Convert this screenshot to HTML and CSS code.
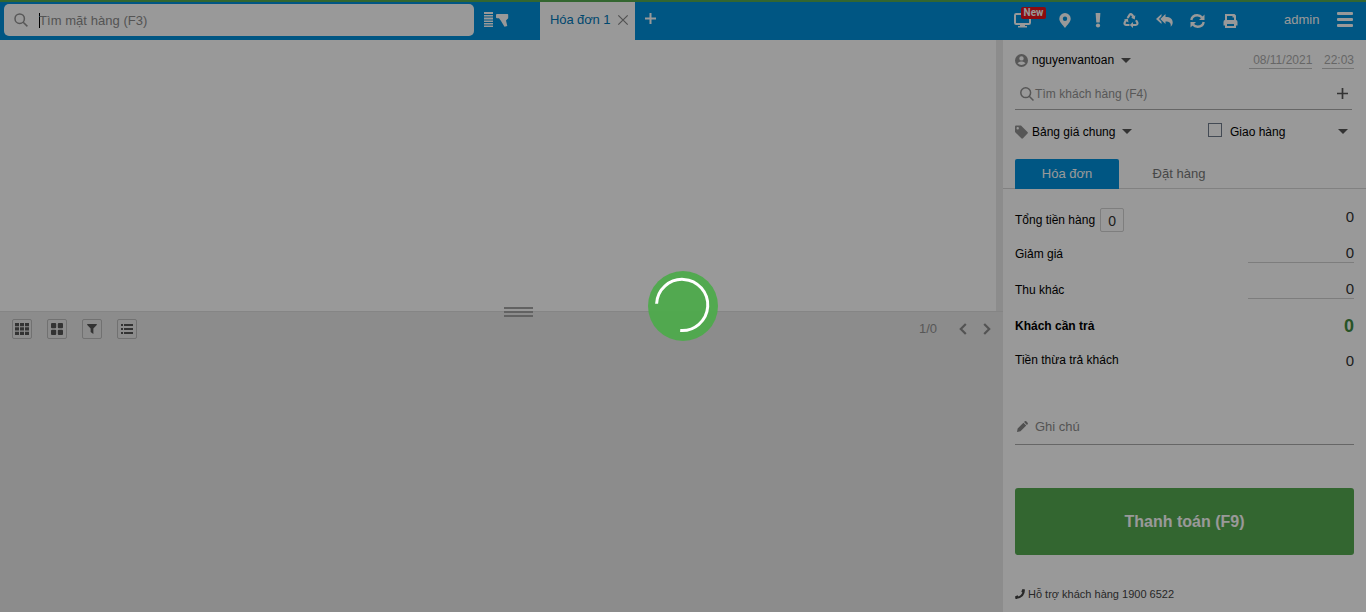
FILE: index.html
```html
<!DOCTYPE html>
<html lang="vi">
<head>
<meta charset="utf-8">
<title>Bán hàng</title>
<link rel="stylesheet" href="styles.css">
</head>
<body>
<div class="app">
  <header class="topbar">
    <div class="search">
      <svg class="search-icon" width="14" height="14" viewBox="0 0 14 14"><circle cx="5.7" cy="5.7" r="4.7"/><path d="M9.2 9.2l4.2 4.2"/></svg>
      <span class="caret"></span><span class="search-text">Tìm mặt hàng (F3)</span>
    </div>
    <svg class="scan-icon" width="25" height="16" viewBox="0 0 25 16"><path d="M0 0h9v2H0zM0 3h9v1.500H0zM0 5.500h9v2H0zM0 8.500h9V10H0zM0 11h9v1.500H0zM0 13.500h9V15H0zM12 3q0-1 1-1h10.500q.7 0 .7.800v3.400L22 8.500l1.300 5.500-2.800.8-3.800-6.300L15 6.200h-2q-1 0-1-1z"/></svg>
    <div class="tab"><span class="tab-text">Hóa đơn 1</span><svg width="10" height="10" viewBox="0 0 10 10"><path d="M.3.3l9.400 9.400M9.700.3L.3 9.700"/></svg></div>
    <svg class="add-tab" width="11" height="11" viewBox="0 0 11 11"><path d="M5.500 0v11M0 5.500h11"/></svg>
    <nav class="tools">
      <span class="tool monitor"><svg width="17" height="15" viewBox="0 0 17 15"><path class="line" d="M8.500 1H2.200Q1 1 1 2.200v7.600Q1 11 2.200 11h12.600q1.200 0 1.200-1.200V6"/><path d="M6 11h5v2h2v1.500H4V13h2z"/></svg><b class="badge">New</b></span>
      <svg class="tool pin" width="12" height="15" viewBox="0 0 12 15"><path fill-rule="evenodd" d="M6 0a5.700 5.700 0 0 1 5.700 5.700C11.700 9 8.500 11.500 6 15 3.500 11.500.3 9 .3 5.700A5.700 5.700 0 0 1 6 0zm0 3.600a2.200 2.200 0 1 0 0 4.400 2.200 2.200 0 0 0 0-4.400z"/></svg>
      <svg class="tool bang" width="6" height="15" viewBox="0 0 6 15"><path d="M.6 0h4.800L4.700 9.400H1.300z"/><circle cx="3" cy="12.500" r="2.100"/></svg>
      <svg class="tool recycle" width="16" height="15" viewBox="0 0 16 15"><path class="arc" d="M4.600 5l2-3.200q1.100-1.300 2.400 0L10.600 4M13 7.200l1.300 2.200q.7 2.400-1.700 2.600H9.500M6.500 12H3.200Q.7 11.500 1.800 9.300L3.200 7"/><path d="M12.300 2.200l-.5 4.200-3.700-1.600zM10 9v6l-3.200-3zM.8 6.800l4-1.300.7 4z"/></svg>
      <svg class="tool reply" width="17" height="13" viewBox="0 0 17 13"><path d="M5.500 0v2.300L3 5l2.500 2.700V10L0 5zM9.500 0v3c5 0 7.200 2 7.200 5.500 0 1.800-.7 3-2 4.300.5-3.800-1-5.300-5.200-5.300V10L4.300 5z"/></svg>
      <svg class="tool refresh" width="15" height="14" viewBox="0 0 15 14"><path class="turn" d="M1.300 6Q2.200 1.300 7.300 1.300q2.900 0 4.800 2.200M13.700 8q-.9 4.700-6 4.700-2.900 0-4.800-2.200"/><path d="M14.500.5V6H9zM.5 13.500V8H6z"/></svg>
      <svg class="tool print" width="15" height="14" viewBox="0 0 15 14"><path fill-rule="evenodd" d="M2 0h9.500L13 1.500V6q1.500.2 1.500 2v3.500H13V14H2v-2.500H.5V8q0-1.800 1.500-2zM4 2v4h7V3.500H9.500V2zM4 10v2h7v-2z"/></svg>
    </nav>
    <span class="user">admin</span>
    <span class="menu"><i></i><i></i><i></i></span>
  </header>
  <div class="body">
    <main class="left">
      <section class="cart"></section>
      <section class="products">
        <div class="grip"><i></i><i></i><i></i></div>
        <div class="views">
          <span class="view"><svg width="14" height="12" viewBox="0 0 14 12"><path d="M0 0h4v3.300H0zM5 0h4v3.300H5zM10 0h4v3.300h-4zM0 4.300h4v3.300H0zM5 4.300h4v3.300H5zM10 4.300h4v3.300h-4zM0 8.700h4V12H0zM5 8.700h4V12H5zM10 8.700h4V12h-4z"/></svg></span>
          <span class="view"><svg width="12" height="12" viewBox="0 0 12 12"><rect width="5.200" height="5.200" rx="1"/><rect x="6.800" width="5.200" height="5.200" rx="1"/><rect y="6.800" width="5.200" height="5.200" rx="1"/><rect x="6.800" y="6.800" width="5.200" height="5.200" rx="1"/></svg></span>
          <span class="view"><svg width="10" height="10" viewBox="0 0 11 11"><path d="M.5 0h10q.7.500.2 1L7 5v6L4 8.700V5L.3 1Q-.2.500.5 0z"/></svg></span>
          <span class="view"><svg width="12" height="10" viewBox="0 0 12 10"><path d="M0 0h2v2H0zM3 0h9v2H3zM0 4h2v2H0zM3 4h9v2H3zM0 8h2v2H0zM3 8h9v2H3z"/></svg></span>
        </div>
        <div class="pager"><span>1/0</span><svg width="8" height="12" viewBox="0 0 8 12"><path d="M6.800 1L1.800 6l5 5"/></svg><svg width="8" height="12" viewBox="0 0 8 12"><path d="M1.200 1l5 5-5 5"/></svg></div>
      </section>
    </main>
    <aside class="panel">
      <div class="row seller">
        <svg class="soft" width="13" height="13" viewBox="0 0 13 13"><path fill-rule="evenodd" d="M6.500 0a6.500 6.500 0 1 1 0 13 6.500 6.500 0 0 1 0-13zm0 2.200a2.200 2.200 0 1 0 0 4.400 2.200 2.200 0 0 0 0-4.400zM2.500 9.200q4 3.500 8 0Q8.500 7 6.500 7.500 4.500 7 2.500 9.200z"/></svg>
        <span class="name">nguyenvantoan</span><i class="arrow"></i>
        <span class="date">08/11/2021</span><span class="time">22:03</span>
      </div>
      <div class="row customer">
        <svg class="search-icon" width="14" height="14" viewBox="0 0 14 14"><circle cx="5.700" cy="5.700" r="4.900"/><path d="M9.200 9.200l4.300 4.300"/></svg>
        <span class="hint">Tìm khách hàng (F4)</span>
        <svg class="plus" width="11" height="11" viewBox="0 0 11 11"><path d="M5.500 0v11M0 5.500h11"/></svg>
      </div>
      <div class="row price">
        <svg class="soft tag" width="13" height="14" viewBox="0 0 13 14"><path fill-rule="evenodd" d="M0 1.500Q0 .5 1 .5h5L12.500 7q.9.800 0 1.600L8 13.300q-.9.800-1.700 0L0 7zM2.700 2a1.200 1.200 0 1 0 0 2.400 1.200 1.200 0 0 0 0-2.400z"/></svg>
        <span class="book">Bảng giá chung</span><i class="arrow"></i>
        <span class="box"></span><span class="ship">Giao hàng</span><i class="arrow last"></i>
      </div>
      <div class="tabs"><span class="mode on">Hóa đơn</span><span class="mode">Đặt hàng</span></div>
      <div class="totals">
        <div class="line total"><span class="label">Tổng tiền hàng</span><span class="count">0</span><span class="value">0</span></div>
        <div class="line discount"><span class="label">Giảm giá</span><span class="value field">0</span></div>
        <div class="line other"><span class="label">Thu khác</span><span class="value field">0</span></div>
        <div class="line due"><span class="label">Khách cần trả</span><span class="value">0</span></div>
        <div class="line change"><span class="label">Tiền thừa trả khách</span><span class="value">0</span></div>
      </div>
      <div class="note"><svg width="11" height="11" viewBox="0 0 12 12"><path d="M0 12l.7-3.800L7 1.900 10.100 5l-6.300 6.300zM7.700 1.200L8.500.4q.8-.7 1.600 0l1.500 1.500q.7.800 0 1.600l-.8.800z"/></svg><span>Ghi chú</span></div>
      <div class="pay">Thanh toán (F9)</div>
      <div class="support"><svg width="10" height="10" viewBox="0 0 10 10"><path d="M7.500 0L10 .5Q10 9.500.5 10L0 7.500l2.500-1.200L3.600 7.500Q6.200 6.300 7.400 3.700L6.300 2.500z"/></svg><span>Hỗ trợ khách hàng 1900 6522</span></div>
    </aside>
  </div>
</div>
<div class="overlay"><svg class="spinner" width="70" height="70" viewBox="0 0 70 70"><circle cx="35" cy="35" r="35"/><path d="M8.600 32.700A25.600 25.600 0 1 1 32.200 59.500"/></svg></div>
</body>
</html>
```

FILE: styles.css
```css
* { box-sizing: border-box; }
body { margin: 0; font: 13px/16px "Liberation Sans", Arial, sans-serif; color: #000; overflow: hidden; }
svg { display: block; flex: none; overflow: visible; }
.app { width: 1366px; height: 612px; display: flex; flex-direction: column; background: #fff; }
.topbar { height: 40px; flex: none; background: #0090da; border-top: 2px solid #56aa50; display: flex; align-items: flex-start; color: #fff; fill: #fff; }
.search { width: 470px; height: 32px; margin: 2px 0 0 4px; border-radius: 5px; background: #fff; color: #8c8c8c; display: flex; align-items: center; padding-left: 10px; }
.search-icon { fill: none; stroke: #919191; stroke-width: 1.5; }
.caret { width: 1px; height: 15px; background: #000; margin-left: 11px; }
.search-text { margin: 1px 0 0 -1px; letter-spacing: .05px; }
.scan-icon { margin: 10px 0 0 10px; }
.tab { width: 95px; height: 38px; margin-left: 31px; background: #fff; color: #0078b8; display: flex; align-items: center; padding: 0 0 3px 10px; gap: 8px; }
.tab-text { width: 60px; letter-spacing: -.1px; white-space: nowrap; }
.tab svg { stroke: #888; stroke-width: 1.2; }
.add-tab { margin: 11px 0 0 10px; stroke: #fff; stroke-width: 2; }
.tools { display: flex; margin-left: 358px; height: 38px; width: 224px; }
.tool { margin-top: 11px; }
.monitor { position: relative; width: 17px; height: 15px; }
.monitor .line { fill: none; stroke: #fff; stroke-width: 2; }
.badge { position: absolute; left: 7px; top: -6px; width: 25px; height: 12px; border-radius: 2px; background: #e9131b; font: bold 10px/12px Roboto, sans-serif; text-align: center; }
.pin { margin-left: 28px; }
.bang { margin-left: 24px; }
.recycle { margin-left: 22px; }
.arc { fill: none; stroke: #fff; stroke-width: 2.2; }
.reply { margin: 12px 0 0 17px; }
.refresh { margin: 12px 0 0 17px; }
.turn { fill: none; stroke: #fff; stroke-width: 2.4; }
.print { margin: 12px 0 0 18px; }
.user { margin: 10px 0 0 46px; width: 36px; white-space: nowrap; }
.menu { width: 16px; margin: 10px 0 0 17px; display: grid; gap: 3px; }
.menu i { height: 3px; background: #fff; border-radius: 1px; }
.body { flex: 1; display: flex; }
.left { width: 1003px; display: flex; flex-direction: column; background: #e9e9e9; }
.cart { height: 271px; width: 996px; background: #fff; }
.products { flex: 1; display: grid; grid-template-columns: 504px 29px 1fr; align-items: start; border-top: 1px solid #dedede; position: relative; }
.grip { position: absolute; left: 504px; top: -5px; width: 29px; display: grid; gap: 2px; }
.grip i { height: 2px; background: #a4a4a4; }
.views { display: flex; gap: 15px; padding: 7px 0 0 12px; }
.view { width: 20px; height: 20px; border: 1px solid #bcbcbc; border-radius: 2px; display: flex; align-items: center; justify-content: center; fill: #555; }
.pager { grid-column: 3; display: flex; align-items: center; padding: 8px 0 0 386px; color: #929292; }
.pager span { width: 40px; font-size: 13px; letter-spacing: -.1px; margin-top: 1px; }
.pager svg { fill: none; stroke: #8b8b8b; stroke-width: 2.2; margin-right: 16px; }
.panel { width: 363px; padding: 0 12px; font-size: 12px; display: flex; flex-direction: column; }
.soft { fill: #929292; }
.row { display: flex; align-items: center; flex: none; }
.seller { height: 40px; }
.name { margin-left: 4px; width: 82px; white-space: nowrap; }
.arrow { border: 5px solid transparent; border-top: 5px solid #555; border-bottom: 0; margin-left: 7px; }
.date, .time { color: #ababab; border-bottom: 1px solid #c2c2c2; text-align: right; height: 18px; line-height: 18px; white-space: nowrap; }
.date { width: 64px; margin-left: 118px; }
.time { width: 32px; margin-left: 10px; }
.customer { height: 30px; width: 337px; border-bottom: 1px solid #aaa; padding: 0 4px 2px 5px; }
.hint { margin-left: 1px; color: #929292; white-space: nowrap; letter-spacing: .05px; }
.plus { stroke: #555; stroke-width: 1.7; margin-left: auto; }
.price { height: 43px; }
.book { width: 83px; margin-left: 4px; white-space: nowrap; }
.box { width: 14px; height: 14px; border: 1px solid #707c8c; margin: -3px 0 0 76px; }
.ship { margin-left: 8px; }
.last { margin-left: auto; margin-right: 6px; }
.tabs { height: 36px; flex: none; margin: 0 -12px; padding: 6px 12px 0; border-bottom: 1px solid #d8d8d8; display: flex; }
.mode { width: 104px; height: 30px; line-height: 30px; font-size: 13px; text-align: center; color: #777; margin-left: 8px; }
.mode.on { background: #0090da; color: #fff; margin-left: 0; border-radius: 2px 2px 0 0; }
.totals { height: 191px; flex: none; }
.line { display: flex; align-items: center; }
.label { white-space: nowrap; }
.value { margin-left: auto; font-size: 15px; color: #333; text-align: right; }
.total { height: 47px; padding-top: 15px; }
.count { margin-left: 5px; width: 24px; height: 24px; border: 1px solid #d2d2d2; border-radius: 2px; text-align: center; line-height: 25px; font-size: 14px; color: #333; }
.total .value { margin-top: -7px; }
.discount { height: 34px; }
.discount .label, .other .label { padding-top: 2px; }
.other { height: 37px; }
.due { height: 36px; padding-top: 1px; font-weight: bold; }
.change { height: 33px; }
.change .value { padding-top: 2px; }
.field { width: 106px; height: 20px; line-height: 19px; border-bottom: 1px solid #d0d0d0; }
.due .value { color: #428a40; font-size: 18px; }
.note { height: 65px; flex: none; border-bottom: 1px solid #aaa; color: #8c8c8c; fill: #858585; font-size: 13px; display: flex; align-items: flex-end; padding: 0 0 9px 2px; gap: 7px; }
.note svg { margin-bottom: 3px; }
.pay { height: 67px; flex: none; margin-top: 43px; border-radius: 3px; background: #56aa50; color: #fff; font-weight: bold; font-size: 16px; line-height: 67px; text-align: center; }
.support { display: flex; align-items: center; margin-top: 31px; gap: 3px; color: #444; fill: #444; font-size: 11px; white-space: nowrap; }
.overlay { position: absolute; z-index: 2; left: 0; top: 0; width: 1366px; height: 612px; background: rgba(0, 0, 0, .4); }
.spinner { position: absolute; left: 648px; top: 271px; }
.spinner circle { fill: #4eaa4c; opacity: .95; }
.spinner path { fill: none; stroke: #fff; stroke-width: 3; }
```
